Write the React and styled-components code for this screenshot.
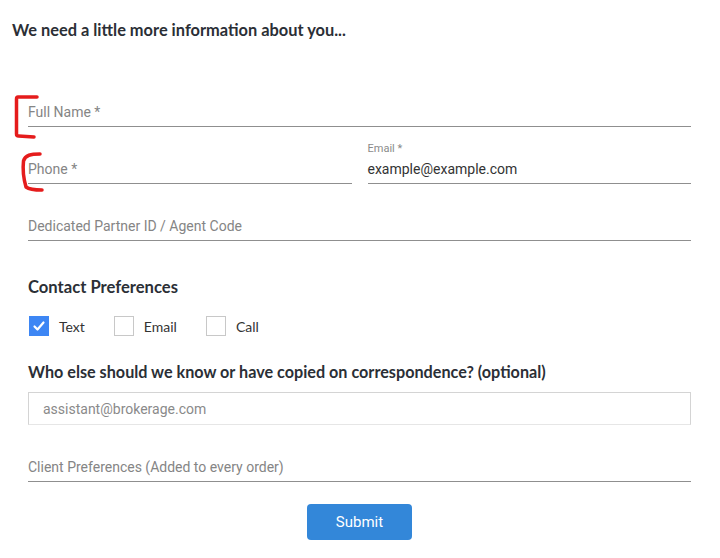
import React from "react";
import styled, { createGlobalStyle } from "styled-components";

const Global = createGlobalStyle`
  html, body { margin: 0; padding: 0; background: #fff; }
  body { font-family: Roboto, "Liberation Sans", sans-serif; }
  * { box-sizing: border-box; }
`;

const Page = styled.div`
  position: relative;
  width: 720px;
  height: 558px;
  padding: 20px 29px 0 12px;
`;

const Title = styled.h1`
  margin: 0;
  font-family: Lato, "Liberation Sans", sans-serif;
  font-weight: 700;
  font-size: 16.4px;
  line-height: 20px;
  color: #2b2f36;
`;

const Form = styled.form`
  display: flex;
  flex-direction: column;
  margin: 59px 0 0 16px;
`;

const LineField = styled.div`
  display: flex;
  align-items: flex-end;
  height: 28px;
  padding-bottom: 4px;
  border-bottom: 1px solid #8f8f8f;
  font-size: 14px;
  line-height: 20px;
  color: ${(p) => (p.$filled ? "#333" : "#858585")};
  margin-top: ${(p) => p.$gap || 0}px;
`;

const Row = styled.div`
  display: grid;
  grid-template-columns: 1fr 1fr;
  column-gap: 16px;
  align-items: end;
  margin-top: ${(p) => p.$gap || 0}px;
`;

const Stack = styled.div`
  display: flex;
  flex-direction: column;
`;

const SmallLabel = styled.div`
  font-size: 11px;
  line-height: 14px;
  color: #8a8a8a;
`;

const Heading = styled.h2`
  margin: ${(p) => p.$gap || 0}px 0 0;
  font-family: Lato, "Liberation Sans", sans-serif;
  font-weight: 700;
  font-size: ${(p) => p.$size || 16}px;
  line-height: 20px;
  color: #2b2f36;
`;

const Checks = styled.div`
  display: flex;
  align-items: center;
  margin-top: 19px;
  margin-left: 1px;
`;

const CheckItem = styled.label`
  display: flex;
  align-items: center;
  gap: 10px;
  margin-right: 29px;
  font-family: Lato, "Liberation Sans", sans-serif;
  font-size: 14px;
  color: #333;
`;

const Box = styled.span`
  display: inline-flex;
  align-items: center;
  justify-content: center;
  width: 20px;
  height: 20px;
  background: ${(p) => (p.$checked ? "#3d86f4" : "#fff")};
  border: ${(p) => (p.$checked ? "none" : "1px solid #c8c8c8")};
`;

const BoxInput = styled.div`
  height: 33px;
  margin-top: 10px;
  padding: 0 14px;
  display: flex;
  align-items: center;
  border: 1px solid #d4d4d4;
  border-bottom-color: #e6e6e6;
  font-size: 14px;
  color: #8a8a8a;
`;

const Actions = styled.div`
  display: flex;
  justify-content: center;
  margin-top: 22px;
`;

const Submit = styled.button`
  width: 105px;
  height: 36px;
  border: none;
  border-radius: 4px;
  background: #3387d9;
  color: #fff;
  font-family: Roboto, "Liberation Sans", sans-serif;
  font-size: 15px;
`;

const Overlay = styled.svg`
  position: absolute;
  top: 0;
  left: 0;
  pointer-events: none;
`;

function Check({ checked, label }) {
  return (
    <CheckItem>
      <Box $checked={checked}>
        {checked && (
          <svg width="14" height="14" viewBox="0 0 14 14">
            <path d="M2.5 7.5 L5.5 10.5 L11.5 3.5" fill="none" stroke="#fff" strokeWidth="2.2" strokeLinecap="round" strokeLinejoin="round" />
          </svg>
        )}
      </Box>
      {label}
    </CheckItem>
  );
}

export default function App() {
  return (
    <>
      <Global />
      <Page>
        <Title>We need a little more information about you...</Title>
        <Form onSubmit={(e) => e.preventDefault()}>
          <LineField>Full Name *</LineField>
          <Row $gap={15}>
            <LineField>Phone *</LineField>
            <Stack>
              <SmallLabel>Email *</SmallLabel>
              <LineField $filled>example@example.com</LineField>
            </Stack>
          </Row>
          <LineField $gap={29}>Dedicated Partner ID / Agent Code</LineField>
          <Heading $gap={36} $size={16.6}>Contact Preferences</Heading>
          <Checks>
            <Check checked label="Text" />
            <Check label="Email" />
            <Check label="Call" />
          </Checks>
          <Heading $gap={26} $size={16.2}>Who else should we know or have copied on correspondence? (optional)</Heading>
          <BoxInput>assistant@brokerage.com</BoxInput>
          <LineField $gap={29}>Client Preferences (Added to every order)</LineField>
          <Actions>
            <Submit type="submit">Submit</Submit>
          </Actions>
        </Form>
        <Overlay width="720" height="558" viewBox="0 0 720 558">
          <path d="M37 97 L18 97 Q16.5 97 16.5 99 L16.5 134 Q16.5 136 18.5 136 L34 137" fill="none" stroke="#e51c1c" strokeWidth="3.5" strokeLinecap="round" strokeLinejoin="round" />
          <path d="M40 154 C31 154 25 155 23.5 161 C22.5 170 24 180 26 187 C30 190 36 190 42 190" fill="none" stroke="#e51c1c" strokeWidth="3.5" strokeLinecap="round" strokeLinejoin="round" />
        </Overlay>
      </Page>
    </>
  );
}
